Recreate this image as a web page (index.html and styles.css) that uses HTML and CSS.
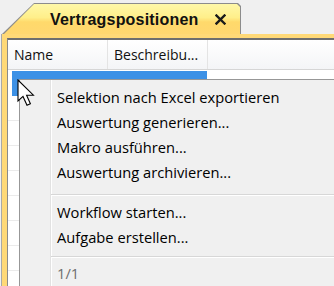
FILE: index.html
```html
<!DOCTYPE html>
<html lang="de">

<head>
    <meta charset="UTF-8">
    <title>Vertragspositionen</title>
    <link rel="stylesheet" href="styles.css">
</head>

<body>

    <div class="tabstrip">
        <div class="tab">
            <div class="tab-face">
                <span class="tab-title">Vertragspositionen</span>
                <svg class="tab-close" width="11" height="11" viewBox="0 0 11 11">
                    <path d="M1.5 1.5 L9.5 9.5 M9.5 1.5 L1.5 9.5" stroke="#1a1a1a" stroke-width="2.4" stroke-linecap="square" />
                </svg>
            </div>
        </div>
    </div>

    <div class="frame">
        <div class="grid">
            <div class="grid-head">
                <div class="col col-name">Name</div>
                <div class="col col-desc">Beschreibu...</div>
                <div class="col col-rest"></div>
            </div>
            <div class="grid-row selected">
                <div class="cell cell-sel"></div>
            </div>
            <div class="grid-row"></div>
            <div class="grid-row"></div>
            <div class="grid-row"></div>
            <div class="grid-row"></div>
            <div class="grid-row"></div>
            <div class="grid-row"></div>
            <div class="grid-row"></div>
        </div>
    </div>

    <!-- Context menu -->
    <div class="menu">
        <div class="menu-item">Selektion nach Excel exportieren</div>
        <div class="menu-item">Auswertung generieren...</div>
        <div class="menu-item">Makro ausführen...</div>
        <div class="menu-item">Auswertung archivieren...</div>
        <div class="menu-sep"></div>
        <div class="menu-item">Workflow starten...</div>
        <div class="menu-item">Aufgabe erstellen...</div>
        <div class="menu-sep menu-sep-small"></div>
        <div class="menu-item disabled">1/1</div>
    </div>

    <svg class="cursor" width="20" height="28" viewBox="0 0 20 28">
        <path d="M1 1 L1 22 L6 17.4 L10 26.3 L13.4 24.8 L9.6 16.2 L16.4 16.2 Z" fill="#fff" stroke="#000"
            stroke-width="1.1" stroke-linejoin="miter" />
    </svg>

</body>

</html>
```

FILE: styles.css
```css
body {
    margin: 0;
    width: 334px;
    height: 286px;
    overflow: hidden;
    position: relative;
    background-color: #f0f0f0;
    font-family: "Open Sans", sans-serif;
}

.tabstrip {
    height: 31px;
    padding: 3px 0 0 2px;
}

.tab {
    width: 239px;
    height: 31px;
    padding: 1px 1px 0 1px;
    box-sizing: border-box;
    background-color: #8c8c8c;
    clip-path: polygon(0 31px, 32px 0, 236px 0, 239px 3px, 239px 31px);
}

.tab-face {
    height: 30px;
    display: flex;
    align-items: center;
    padding-left: 47px;
    background: linear-gradient(#fff8a8, #ffef8a 45%, #ffd96b 60%, #ffd770);
    clip-path: polygon(0 31px, 31px 0, 234px 0, 237px 3px, 237px 31px);
}

.tab-title {
    font-family: "Liberation Sans", Arial, sans-serif;
    font-weight: bold;
    font-size: 16px;
    color: #111;
    letter-spacing: 0.2px;
    margin-top: 1px;
}

.tab-close {
    margin-left: 16px;
    margin-top: 1px;
}

.frame {
    margin-left: 1px;
    padding: 4px 0 0 5px;
    box-sizing: border-box;
    border-left: 1px solid #a8a8a8;
    background-color: #ffd977;
    height: 252px;
}

.grid {
    height: 100%;
    box-sizing: border-box;
    background-color: #fff;
    border-top: 2px solid #6e6e6e;
    border-left: 1px solid #8a8a8a;
}

.grid-head {
    display: flex;
    height: 29px;
    border-bottom: 1px solid #d6d6d6;
    background: linear-gradient(#ffffff, #f4f5f7);
    font-size: 14px;
    color: #111;
}

.col {
    display: flex;
    align-items: center;
    padding-left: 6px;
    box-sizing: border-box;
    border-right: 1px solid #e4e4e4;
    white-space: nowrap;
}

.col-name {
    width: 100px;
}

.col-desc {
    width: 100px;
}

.col-rest {
    flex: 1;
    border-right: none;
}

.grid-row {
    height: 24px;
    border-bottom: 1px solid #ebebeb;
}

.grid-row.selected {
    margin-top: 1px;
    padding-left: 4px;
    border-bottom: none;
    height: 25px;
}

.cell-sel {
    width: 195px;
    height: 100%;
    background-color: #3c91e6;
}

.menu {
    position: absolute;
    left: 19px;
    top: 79px;
    right: 0;
    bottom: 0;
    padding-top: 5px;
    background-color: #f0f0f0;
    border-top: 1px solid #979797;
    border-left: 1px solid #979797;
    background-image: linear-gradient(90deg, transparent 30px, #e2e2e2 30px, #e2e2e2 31px, #fff 31px, #fff 32px, transparent 32px);
    font-size: 14.7px;
    color: #000;
}

.menu-item {
    height: 25px;
    line-height: 25px;
    padding-left: 37px;
    white-space: nowrap;
}

.menu-item.disabled {
    color: #6d6d6d;
}

.menu-sep {
    height: 15px;
    margin-left: 31px;
    background: linear-gradient(transparent 9px, #d7d7d7 9px, #d7d7d7 10px, #fff 10px, #fff 11px, transparent 11px);
}

.menu-sep-small {
    height: 11px;
    background: linear-gradient(transparent 6px, #d7d7d7 6px, #d7d7d7 7px, #fff 7px, #fff 8px, transparent 8px);
}

.cursor {
    position: absolute;
    left: 17px;
    top: 79px;
}
```
